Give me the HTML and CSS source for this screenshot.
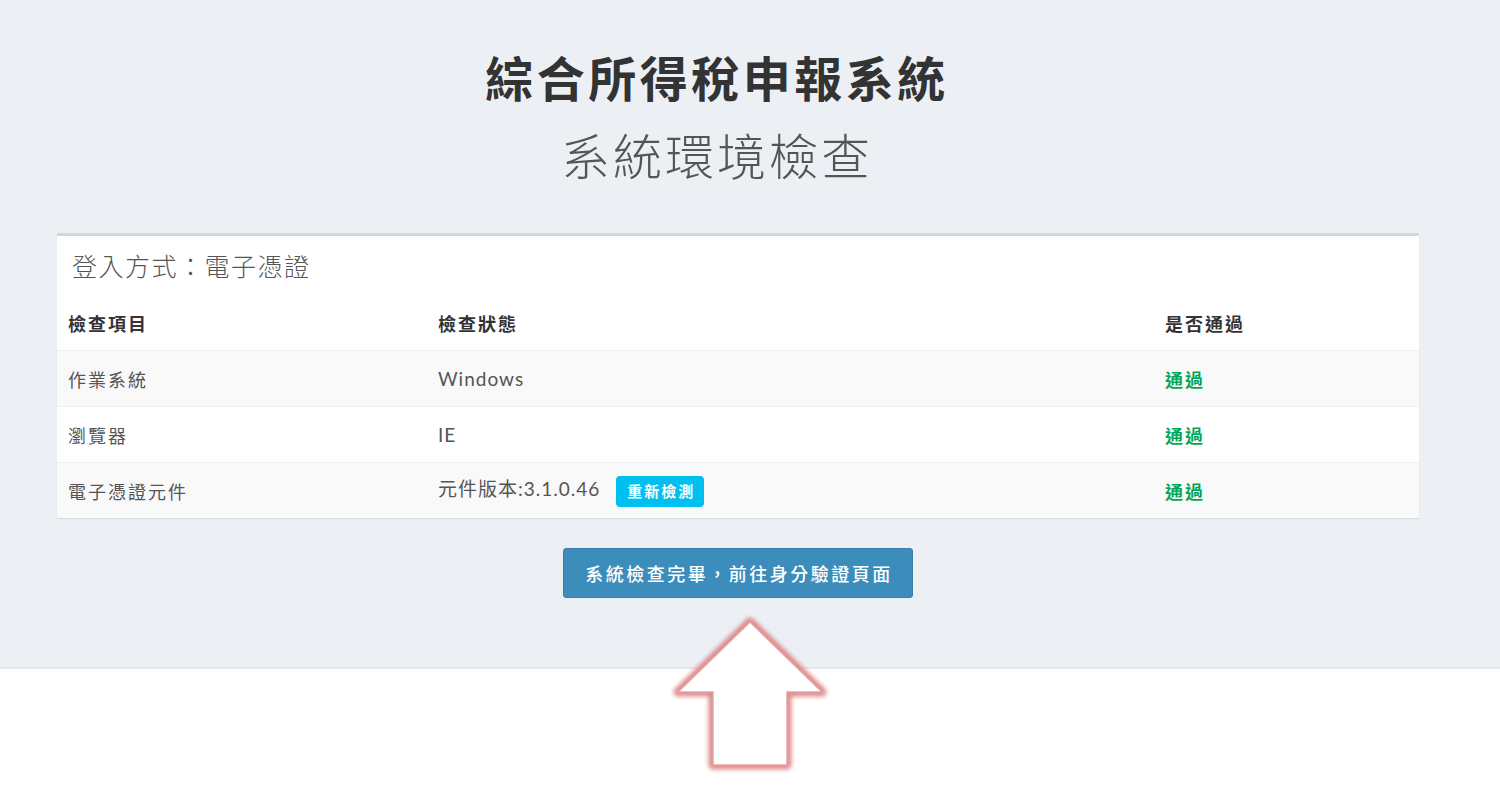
FILE: index.html
```html
<!DOCTYPE html>
<html lang="zh-Hant">
<head>
<meta charset="utf-8">
<title>系統環境檢查</title>
<link rel="stylesheet" href="styles.css">
</head>
<body>
<div class="page">
  <header class="heading">
    <h1 class="title">綜合所得稅申報系統</h1>
    <h2 class="subtitle">系統環境檢查</h2>
  </header>
  <section class="box">
    <div class="box-header">登入方式：電子憑證</div>
    <table class="check-table">
      <thead>
        <tr><th class="c1">檢查項目</th><th class="c2">檢查狀態</th><th class="c3">是否通過</th></tr>
      </thead>
      <tbody>
        <tr class="odd"><td>作業系統</td><td class="latin">Windows</td><td class="pass">通過</td></tr>
        <tr><td>瀏覽器</td><td class="latin">IE</td><td class="pass">通過</td></tr>
        <tr class="odd"><td>電子憑證元件</td><td class="latin">元件版本:3.1.0.46<span class="badge">重新檢測</span></td><td class="pass">通過</td></tr>
      </tbody>
    </table>
  </section>
  <div class="actions">
    <button class="btn-primary" type="button">系統檢查完畢，前往身分驗證頁面</button>
  </div>
</div>
<svg class="arrow" width="170" height="175" viewBox="0 0 170 175" xmlns="http://www.w3.org/2000/svg">
  <defs>
    <filter id="glow" x="-20%" y="-20%" width="140%" height="140%">
      <feGaussianBlur stdDeviation="2.2"/>
    </filter>
  </defs>
  <polygon points="85,17 13,87 48,87 48,160 122,160 122,87 157,87" fill="none" stroke="#d97878" stroke-width="9" stroke-linejoin="round" filter="url(#glow)" opacity="0.85"/>
  <polygon points="85,17 13,87 48,87 48,160 122,160 122,87 157,87" fill="#ffffff" stroke="#e6a3a3" stroke-width="1.5" stroke-linejoin="miter"/>
</svg>
</body>
</html>
```

FILE: styles.css
```css
html, body {
  margin: 0;
  padding: 0;
  background: #ffffff;
}

body {
  font-family: Lato, "Noto Sans CJK TC", sans-serif;
  color: #333333;
  position: relative;
  min-height: 789px;
}

.page {
  background: #ecf0f5;
  height: 669px;
  box-sizing: border-box;
  padding-top: 46px;
  border-bottom: 2px solid #e4e7ed;
}

.heading {
  text-align: center;
  padding-right: 66px;
}

.title {
  margin: 0;
  font-family: "Noto Sans CJK TC", sans-serif;
  font-size: 48px;
  line-height: 60px;
  font-weight: 700;
  letter-spacing: 3.5px;
  color: #333333;
}

.subtitle {
  margin: 18px 0 0;
  font-family: "Noto Sans CJK TC", sans-serif;
  font-size: 49px;
  line-height: 60px;
  font-weight: 300;
  letter-spacing: 3px;
  color: #555555;
}

.box {
  margin: 49px 81px 0 57px;
  background: #ffffff;
  border-top: 3px solid #d2d6de;
  box-shadow: 0 1px 1px rgba(0, 0, 0, 0.08);
}

.box-header {
  padding: 9px 15px 11px;
  line-height: 40px;
  font-family: "Noto Sans CJK TC", sans-serif;
  font-size: 25px;
  font-weight: 300;
  letter-spacing: 1.5px;
  color: #555555;
}

.check-table {
  width: 100%;
  border-collapse: collapse;
  font-family: Lato, "Noto Sans CJK TC", sans-serif;
  font-size: 18px;
  letter-spacing: 2px;
}

.check-table th,
.check-table td {
  padding: 0 11px;
  text-align: left;
  vertical-align: middle;
}

.check-table th {
  height: 54px;
  font-weight: 700;
  color: #333333;
}

.check-table td {
  height: 55px;
  color: #555555;
  border-top: 1px solid #f1f1f1;
}

.check-table .c1 { width: 348px; }
.check-table .c2 { width: 705px; }

.check-table tr.odd td {
  background: #f9f9f9;
}

.check-table td.latin {
  font-size: 19px;
  letter-spacing: 1px;
}

.check-table td.pass {
  color: #00a65a;
  font-weight: 700;
}

.badge {
  display: inline-block;
  margin-left: 16px;
  height: 31px;
  line-height: 31px;
  padding: 0 9px 0 11px;
  border-radius: 4px;
  background: #00c0ef;
  color: #ffffff;
  font-size: 15px;
  letter-spacing: 2px;
  font-weight: 700;
  vertical-align: middle;
}

.actions {
  margin: 30px 81px 0 57px;
  text-align: center;
}

.btn-primary {
  height: 50px;
  padding: 0 19px 0 21px;
  border: 1px solid #367fa9;
  border-radius: 3px;
  background: #3c8dbc;
  color: #ffffff;
  font-family: "Noto Sans CJK TC", sans-serif;
  font-size: 18px;
  letter-spacing: 2.5px;
  font-weight: 500;
  cursor: pointer;
}

.arrow {
  position: absolute;
  left: 665px;
  top: 605px;
}
```
